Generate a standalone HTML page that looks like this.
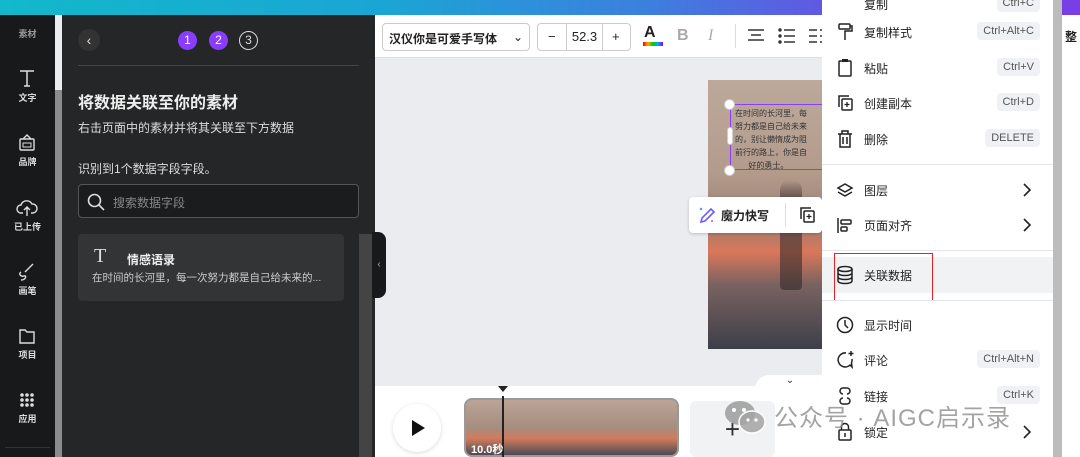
<!DOCTYPE html>
<html><head><meta charset="utf-8"><style>
*{margin:0;padding:0;box-sizing:border-box}
body{width:1080px;height:457px;overflow:hidden;position:relative;font-family:"Liberation Sans","Noto Sans CJK SC",sans-serif;background:#ebecf0}
.a{position:absolute}
.rail{left:0;top:15px;width:55px;height:442px;background:#18191b}
.ri{position:absolute;left:0;width:55px;text-align:center;color:#ddd;font-size:9px;font-weight:bold}
.panel{left:55px;top:15px;width:320px;height:442px;background:#252627;color:#eee}
.menu{left:822px;top:0;width:232px;height:457px;background:#fff;font-size:12px;color:#222}
.mi{position:absolute;left:0;width:232px;height:36px}
.mi .t{position:absolute;left:42px;top:10px}
.mi .k{position:absolute;right:14px;top:8px;background:#f0f1f4;border-radius:4px;font-size:11px;color:#555;padding:3px 6px}
.mi svg{position:absolute;left:14px;top:8px}
.sep{position:absolute;left:0;width:232px;height:1px;background:#e4e5ea}
</style></head><body>
<div class="a" style="left:0;top:0;width:1080px;height:15px;background:linear-gradient(90deg,#13b8cb,#1aa6d4 35%,#3d7fde 60%,#6a4fe3 80%,#7a3ee6)"></div>
<div class="a rail">
<div class="ri" style="top:12px;color:#999">素材</div>
<svg class="a" style="left:17px;top:53px" width="20" height="20" viewBox="0 0 20 20"><path d="M3 3h14M10 3v15M7 18h6" stroke="#ddd" stroke-width="1.5" fill="none"/></svg>
<div class="ri" style="top:76px">文字</div>
<svg class="a" style="left:17px;top:118px" width="20" height="20" viewBox="0 0 20 20"><rect x="3" y="6" width="14" height="11" rx="1" fill="none" stroke="#ddd" stroke-width="1.4"/><path d="M6 6l4-4 4 4" stroke="#ddd" stroke-width="1.4" fill="none"/><rect x="6" y="10" width="8" height="4" fill="none" stroke="#ddd" stroke-width="1"/></svg>
<div class="ri" style="top:140px">品牌</div>
<svg class="a" style="left:16px;top:183px" width="22" height="20" viewBox="0 0 22 20"><path d="M7 15H5a4 4 0 0 1 0-8 6 6 0 0 1 11-1 4.5 4.5 0 0 1 1 9h-2M11 18V9M8 12l3-3 3 3" stroke="#ddd" stroke-width="1.4" fill="none"/></svg>
<div class="ri" style="top:205px">已上传</div>
<svg class="a" style="left:17px;top:247px" width="20" height="20" viewBox="0 0 20 20"><path d="M16 2l-8 8M4 10c-3 2 0 5 3 4s2 4-3 4" stroke="#ddd" stroke-width="1.4" fill="none"/></svg>
<div class="ri" style="top:269px">画笔</div>
<svg class="a" style="left:17px;top:311px" width="20" height="20" viewBox="0 0 20 20"><path d="M3 4h5l2 2h7v11H3z" stroke="#ddd" stroke-width="1.4" fill="none"/></svg>
<div class="ri" style="top:333px">项目</div>
<svg class="a" style="left:19px;top:377px" width="16" height="16" viewBox="0 0 16 16" fill="#ddd"><circle cx="3" cy="3" r="1.8"/><circle cx="8" cy="3" r="1.8"/><circle cx="13" cy="3" r="1.8"/><circle cx="3" cy="8" r="1.8"/><circle cx="8" cy="8" r="1.8"/><circle cx="13" cy="8" r="1.8"/><circle cx="3" cy="13" r="1.8"/><circle cx="8" cy="13" r="1.8"/><circle cx="13" cy="13" r="1.8"/></svg>
<div class="ri" style="top:397px">应用</div>
<div class="a" style="left:5px;top:432px;width:45px;height:1px;background:#333"></div>
</div>
<div class="a" style="left:55px;top:90px;width:7px;height:367px;background:#8c8c8c"></div>
<div class="a panel" style="left:62px;width:313px">
<div class="a" style="left:16px;top:14px;width:22px;height:22px;border-radius:50%;background:#333;color:#ddd;text-align:center;font-size:14px;line-height:22px">‹</div>
<div class="a" style="left:116px;top:16px;width:19px;height:19px;border-radius:50%;background:#8b3dff;color:#fff;font-size:12px;text-align:center;line-height:19px">1</div>
<div class="a" style="left:147px;top:16px;width:19px;height:19px;border-radius:50%;background:#8b3dff;color:#fff;font-size:12px;text-align:center;line-height:19px">2</div>
<div class="a" style="left:177px;top:16px;width:19px;height:19px;border-radius:50%;border:1.5px solid #ddd;color:#ddd;font-size:12px;text-align:center;line-height:16px">3</div>
<div class="a" style="left:16px;top:50px;width:281px;height:1px;background:#444"></div>
<div class="a" style="left:16px;top:74px;font-size:16px;font-weight:bold">将数据关联至你的素材</div>
<div class="a" style="left:16px;top:104px;font-size:12px;color:#ddd">右击页面中的素材并将其关联至下方数据</div>
<div class="a" style="left:16px;top:145px;font-size:12px;color:#ddd">识别到1个数据字段字段。</div>
<div class="a" style="left:16px;top:169px;width:281px;height:34px;border:1px solid #555;border-radius:4px;background:#1b1c1e"></div>
<svg class="a" style="left:24px;top:177px" width="20" height="20" viewBox="0 0 20 20"><circle cx="8.5" cy="8.5" r="6" fill="none" stroke="#ddd" stroke-width="1.6"/><path d="M13 13l5 5" stroke="#ddd" stroke-width="1.6"/></svg>
<div class="a" style="left:51px;top:179px;font-size:12px;color:#888">搜索数据字段</div>
<div class="a" style="left:16px;top:219px;width:266px;height:67px;background:#333436;border-radius:4px"></div>
<div class="a" style="left:32px;top:230px;font-size:20px;font-family:'Liberation Serif',serif;color:#ddd">T</div>
<div class="a" style="left:65px;top:236px;font-size:12px;font-weight:bold">情感语录</div>
<div class="a" style="left:30px;top:255px;font-size:10.5px;color:#ccc">在时间的长河里，每一次努力都是自己给未来的...</div>
<div class="a" style="left:297px;top:219px;width:13px;height:223px;background:#444"></div>
</div>
<div class="a" style="left:372px;top:232px;width:14px;height:66px;background:#18191b;border-radius:0 8px 8px 0;color:#aaa;font-size:10px;line-height:66px;text-align:center">‹</div>
<div class="a" style="left:375px;top:15px;width:450px;height:43px;background:#fff;border-bottom:1px solid #e0e0e0"></div>
<div class="a" style="left:382px;top:23px;width:148px;height:28px;border:1px solid #ccc;border-radius:4px;font-size:12px;font-weight:bold;padding:6px 6px;color:#222">汉仪你是可爱手写体 <span style="float:right;font-weight:normal">⌄</span></div>
<div class="a" style="left:537px;top:23px;width:94px;height:28px;border:1px solid #ccc;border-radius:4px;font-size:13px;color:#222">
<span class="a" style="left:10px;top:5px">−</span><span class="a" style="left:28px;top:0;width:37px;height:26px;border-left:1px solid #ccc;border-right:1px solid #ccc;text-align:center;line-height:26px">52.3</span><span class="a" style="left:74px;top:5px">+</span></div>
<div class="a" style="left:644px;top:24px;font-size:16px;font-weight:bold;color:#222">A</div>
<div class="a" style="left:643px;top:42px;width:20px;height:4px;background:linear-gradient(90deg,red,orange,#0c0,#0af,#80f)"></div>
<div class="a" style="left:677px;top:27px;font-size:16px;font-weight:bold;color:#aaa">B</div>
<div class="a" style="left:708px;top:27px;font-size:16px;font-style:italic;color:#aaa;font-family:'Liberation Serif',serif">I</div>
<div class="a" style="left:735px;top:24px;width:1px;height:24px;background:#ddd"></div>
<svg class="a" style="left:747px;top:28px" width="18" height="16" viewBox="0 0 18 16"><path d="M1 2h16M4 7h10M1 12h16" stroke="#333" stroke-width="1.6"/></svg>
<svg class="a" style="left:778px;top:28px" width="18" height="16" viewBox="0 0 18 16" fill="#333"><circle cx="2" cy="2" r="1.7"/><circle cx="2" cy="8" r="1.7"/><circle cx="2" cy="14" r="1.7"/><path d="M6 2h11M6 8h11M6 14h11" stroke="#333" stroke-width="1.6"/></svg>
<svg class="a" style="left:809px;top:28px" width="16" height="16" viewBox="0 0 16 16"><path d="M0 2h8M0 8h8M0 14h8M11 2h5M11 8h5M11 14h5" stroke="#333" stroke-width="1.6"/></svg>
<div class="a" style="left:708px;top:80px;width:114px;height:269px;background:linear-gradient(180deg,#bca99a 0%,#b39b8c 35%,#9a7f72 52%,#d9775a 64%,#7a6260 76%,#3d3f4a 100%)"></div>
<div class="a" style="left:780px;top:180px;width:22px;height:110px;background:linear-gradient(180deg,rgba(60,45,45,.0),rgba(60,45,45,.55) 15%,rgba(50,40,40,.6));border-radius:10px 10px 4px 4px"></div>
<div class="a" style="left:730px;top:104px;width:92px;height:66px;border:1.5px solid #8b3dff;border-right:none;font-size:8px;color:#333;line-height:13px;padding:2px 4px;overflow:hidden;white-space:nowrap">在时间的长河里，每<br>努力都是自己给未来<br>的，别让懒惰成为阻<br>前行的路上，你是自<br>&nbsp;&nbsp;&nbsp;&nbsp;&nbsp;&nbsp;好的勇士。</div>
<div class="a" style="left:724px;top:99px;width:11px;height:11px;border-radius:50%;background:#fff;border:1px solid #ccc"></div>
<div class="a" style="left:724px;top:165px;width:11px;height:11px;border-radius:50%;background:#fff;border:1px solid #ccc"></div>
<div class="a" style="left:727px;top:127px;width:6px;height:18px;border-radius:3px;background:#fff;border:1px solid #ccc"></div>
<div class="a" style="left:689px;top:197px;width:133px;height:36px;background:#fff;border-radius:4px;box-shadow:0 1px 3px rgba(0,0,0,.2)"></div>
<svg class="a" style="left:697px;top:205px" width="20" height="20" viewBox="0 0 20 20"><path d="M4 17l1-4 9-9 3 3-9 9z" stroke="#6a5cff" stroke-width="1.6" fill="none"/><circle cx="4" cy="4" r="1.2" fill="#3aa0ff"/><circle cx="15" cy="16" r="1" fill="#b04cff"/></svg>
<div class="a" style="left:721px;top:207px;font-size:12px;font-weight:bold;color:#222">魔力快写</div>
<div class="a" style="left:785px;top:203px;width:1px;height:24px;background:#ddd"></div>
<svg class="a" style="left:798px;top:205px" width="18" height="20" viewBox="0 0 18 20"><path d="M3 14V3h10" stroke="#222" stroke-width="1.5" fill="none"/><rect x="6" y="6" width="10" height="11" rx="1" fill="none" stroke="#222" stroke-width="1.5"/><path d="M11 9v5M8.5 11.5h5" stroke="#222" stroke-width="1.3"/></svg>
<div class="a" style="left:375px;top:386px;width:450px;height:71px;background:#fff"></div>
<div class="a" style="left:755px;top:375px;width:70px;height:15px;background:#fff;border-radius:14px 0 0 0;font-size:10px;text-align:center;color:#333">⌄</div>
<div class="a" style="left:393px;top:404px;width:48px;height:48px;border-radius:50%;background:#fff;box-shadow:0 1px 4px rgba(0,0,0,.15)"></div>
<div class="a" style="left:412px;top:420px;width:0;height:0;border-left:13px solid #111;border-top:8px solid transparent;border-bottom:8px solid transparent"></div>
<div class="a" style="left:464px;top:398px;width:215px;height:59px;border:2px solid #999;border-radius:8px;background:linear-gradient(180deg,#bba597 0%,#a58d80 50%,#d27b5c 70%,#4a4b55 100%)"></div>
<div class="a" style="left:502px;top:396px;width:2px;height:61px;background:#222"></div>
<div class="a" style="left:498px;top:386px;width:0;height:0;border-left:5px solid transparent;border-right:5px solid transparent;border-top:6px solid #222"></div>
<div class="a" style="left:471px;top:441px;font-size:11px;font-weight:bold;color:#fff">10.0秒</div>
<div class="a" style="left:690px;top:401px;width:85px;height:56px;background:#f1f2f4;border-radius:6px;font-size:26px;color:#333;text-align:center;line-height:56px">+</div>
<div class="a menu">
<div class="mi" style="top:-14px"><span class="t">复制</span><span class="k">Ctrl+C</span></div>
<div class="mi" style="top:14px"><svg width="18" height="20" viewBox="0 0 18 20"><rect x="3" y="2" width="11" height="5" rx="1" fill="none" stroke="#222" stroke-width="1.5"/><path d="M14 4h2v5H9v3M9 12v6" stroke="#222" stroke-width="1.5" fill="none"/></svg><span class="t">复制样式</span><span class="k">Ctrl+Alt+C</span></div>
<div class="mi" style="top:50px"><svg width="18" height="20" viewBox="0 0 18 20"><rect x="3" y="3" width="12" height="15" rx="1" fill="none" stroke="#222" stroke-width="1.5"/><rect x="6" y="1" width="6" height="3" fill="#222"/></svg><span class="t">粘贴</span><span class="k">Ctrl+V</span></div>
<div class="mi" style="top:85px"><svg width="18" height="20" viewBox="0 0 18 20"><path d="M3 14V3h10" stroke="#222" stroke-width="1.5" fill="none"/><rect x="6" y="6" width="10" height="11" rx="1" fill="none" stroke="#222" stroke-width="1.5"/><path d="M11 9v5M8.5 11.5h5" stroke="#222" stroke-width="1.3"/></svg><span class="t">创建副本</span><span class="k">Ctrl+D</span></div>
<div class="mi" style="top:121px"><svg width="18" height="20" viewBox="0 0 18 20"><path d="M2 5h14M6 5V2h6v3M4 5v13h10V5M7 8v7M11 8v7" stroke="#222" stroke-width="1.5" fill="none"/></svg><span class="t">删除</span><span class="k">DELETE</span></div>
<div class="sep" style="top:164px"></div>
<div class="mi" style="top:172px"><svg width="18" height="20" viewBox="0 0 18 20"><path d="M9 4l7 4-7 4-7-4zM2 12l7 4 7-4" stroke="#222" stroke-width="1.5" fill="none"/></svg><span class="t">图层</span><svg style="left:200px;top:10px" width="10" height="16" viewBox="0 0 10 16"><path d="M2 2l6 6-6 6" stroke="#222" stroke-width="1.6" fill="none"/></svg></div>
<div class="mi" style="top:207px"><svg width="18" height="20" viewBox="0 0 18 20"><path d="M2 3v15" stroke="#222" stroke-width="1.5"/><rect x="5" y="5" width="10" height="4" rx="1" fill="none" stroke="#222" stroke-width="1.5"/><rect x="5" y="12" width="6" height="4" rx="1" fill="none" stroke="#222" stroke-width="1.5"/></svg><span class="t">页面对齐</span><svg style="left:200px;top:10px" width="10" height="16" viewBox="0 0 10 16"><path d="M2 2l6 6-6 6" stroke="#222" stroke-width="1.6" fill="none"/></svg></div>
<div class="sep" style="top:250px"></div>
<div class="a" style="left:0;top:257px;width:232px;height:36px;background:#f1f2f4"></div>
<div class="a" style="left:12px;top:253px;width:99px;height:48px;border:1.5px solid #e8202a"></div>
<div class="mi" style="top:257px"><svg width="18" height="20" viewBox="0 0 18 20"><ellipse cx="9" cy="4" rx="7" ry="2.5" fill="none" stroke="#222" stroke-width="1.5"/><path d="M2 4v12c0 1.4 3 2.5 7 2.5s7-1.1 7-2.5V4M2 8c0 1.4 3 2.5 7 2.5s7-1.1 7-2.5M2 12c0 1.4 3 2.5 7 2.5s7-1.1 7-2.5" stroke="#222" stroke-width="1.5" fill="none"/></svg><span class="t">关联数据</span></div>
<div class="sep" style="top:300px"></div>
<div class="mi" style="top:307px"><svg width="18" height="20" viewBox="0 0 18 20"><circle cx="9" cy="10" r="7.5" fill="none" stroke="#222" stroke-width="1.5"/><path d="M9 5v5l3 3" stroke="#222" stroke-width="1.5" fill="none"/></svg><span class="t">显示时间</span></div>
<div class="mi" style="top:342px"><svg width="18" height="20" viewBox="0 0 18 20"><path d="M10 3a7 7 0 1 0 4 12l2 2-.5-4A7 7 0 0 0 16 9" stroke="#222" stroke-width="1.5" fill="none"/><path d="M15 1v5M12.5 3.5h5" stroke="#222" stroke-width="1.5"/></svg><span class="t">评论</span><span class="k">Ctrl+Alt+N</span></div>
<div class="mi" style="top:378px"><svg width="18" height="20" viewBox="0 0 18 20"><path d="M7 8a3 3 0 0 1 0-6h4a3 3 0 0 1 0 6M11 12a3 3 0 0 1 0 6H7a3 3 0 0 1 0-6" stroke="#222" stroke-width="1.5" fill="none"/></svg><span class="t">链接</span><span class="k">Ctrl+K</span></div>
<div class="mi" style="top:414px"><svg width="18" height="20" viewBox="0 0 18 20"><rect x="3" y="8" width="12" height="10" rx="1" fill="none" stroke="#222" stroke-width="1.5"/><path d="M5.5 8V5a3.5 3.5 0 0 1 7 0v3M9 11v4" stroke="#222" stroke-width="1.5" fill="none"/></svg><span class="t">锁定</span><svg style="left:200px;top:10px" width="10" height="16" viewBox="0 0 10 16"><path d="M2 2l6 6-6 6" stroke="#222" stroke-width="1.6" fill="none"/></svg></div>
</div>
<div class="a" style="left:1053px;top:0;width:9px;height:457px;background:#bcbcbc"></div>
<div class="a" style="left:1062px;top:0;width:18px;height:15px;background:#7a3ee6"></div>
<div class="a" style="left:1062px;top:15px;width:18px;height:442px;background:#fff"></div>
<div class="a" style="left:1065px;top:28px;font-size:12px;font-weight:bold;color:#222">整</div>
<svg class="a" style="left:723px;top:398px" width="44" height="38" viewBox="0 0 44 38"><ellipse cx="17" cy="15" rx="15" ry="12" fill="rgba(150,150,150,.8)"/><ellipse cx="29" cy="24" rx="13" ry="11" fill="rgba(165,165,165,.85)" stroke="#fff" stroke-width="1.5"/><circle cx="11" cy="12" r="2" fill="#fff"/><circle cx="21" cy="12" r="2" fill="#fff"/><circle cx="25" cy="22" r="1.6" fill="#fff"/><circle cx="33" cy="22" r="1.6" fill="#fff"/></svg>
<div class="a" style="left:774px;top:398px;font-size:24px;color:rgba(140,140,140,.8);letter-spacing:1px">公众号 · AIGC启示录</div>
</body></html>
